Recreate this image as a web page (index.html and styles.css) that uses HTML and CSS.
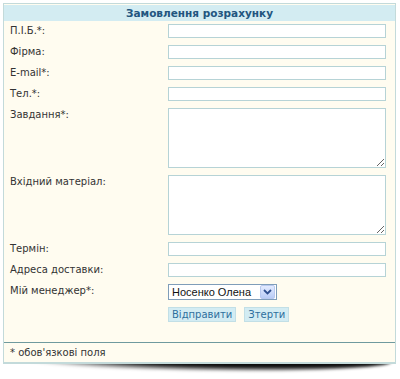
FILE: index.html
```html
<!DOCTYPE html>
<html lang="uk">

<head>
    <meta charset="UTF-8">
    <title>Замовлення розрахунку</title>
    <link rel="stylesheet" href="styles.css">
</head>

<body>
    <div class="panel">
        <div class="panel-head">Замовлення розрахунку</div>

        <form class="order-form">
            <label class="lbl">П.І.Б.*:</label>
            <input type="text" class="field">

            <label class="lbl">Фірма:</label>
            <input type="text" class="field">

            <label class="lbl">E-mail*:</label>
            <input type="text" class="field">

            <label class="lbl">Тел.*:</label>
            <input type="text" class="field">

            <label class="lbl">Завдання*:</label>
            <textarea class="field area"></textarea>

            <label class="lbl">Вхідний матеріал:</label>
            <textarea class="field area"></textarea>

            <label class="lbl">Термін:</label>
            <input type="text" class="field">

            <label class="lbl">Адреса доставки:</label>
            <input type="text" class="field">

            <label class="lbl">Мій менеджер*:</label>
            <div class="select">
                <span class="select-text">Носенко Олена</span>
                <span class="select-btn">
                    <svg width="9" height="6" viewBox="0 0 9 6">
                        <path d="M1 1 L4.5 4.5 L8 1" fill="none" stroke="#2f4f8f" stroke-width="1.8"/>
                    </svg>
                </span>
            </div>

            <span></span>
            <div class="buttons">
                <button type="button" class="btn">Відправити</button>
                <button type="reset" class="btn">Зтерти</button>
            </div>
        </form>

        <div class="panel-foot">* обов'язкові поля</div>
    </div>
    <div class="shadow"></div>
</body>

</html>
```

FILE: styles.css
```css
body {
    margin: 0;
    padding: 3px;
    background: #fff;
    font-family: "DejaVu Sans", Verdana, sans-serif;
    font-size: 10px;
    color: #333;
}

.panel {
    position: relative;
    z-index: 1;
    width: 391px;
    border: 1px solid #c3dada;
    border-bottom-width: 2px;
    background: #fffcf0;
}

.panel-head {
    margin-top: 1px;
    height: 16px;
    line-height: 16px;
    background: #d3ecf2;
    color: #22557f;
    font-weight: bold;
    font-size: 10.5px;
    text-align: center;
}

.order-form {
    display: grid;
    grid-template-columns: 158px 218px;
    row-gap: 7px;
    padding: 3px 0 20px 6px;
    border-bottom: 1px solid #6f9a9e;
}

.lbl {
    line-height: 14px;
}

.field {
    box-sizing: border-box;
    width: 218px;
    height: 14px;
    margin: 0;
    padding: 0;
    border: 1px solid #b6d3d6;
    background: #fff;
}

.area {
    height: 60px;
    resize: vertical;
}

.select {
    box-sizing: border-box;
    display: flex;
    align-items: center;
    justify-content: space-between;
    width: 109px;
    height: 16px;
    border: 1px solid #7f9db9;
    background: #fff;
    padding: 0 1px 0 3px;
}

.select-text {
    font-family: "Liberation Sans", Arial, sans-serif;
    font-size: 11px;
    color: #111;
}

.select-btn {
    display: flex;
    align-items: center;
    justify-content: center;
    width: 15px;
    height: 14px;
    border: 1px solid #b9c9ef;
    border-radius: 2px;
    box-sizing: border-box;
    background: linear-gradient(#e3ebff, #b9ccf6);
}

.buttons {
    display: flex;
    gap: 8px;
}

.btn {
    height: 15px;
    margin: 0;
    padding: 0 3px;
    border: 1px solid #c2dfe6;
    background: #d3ecf3;
    color: #2e6f9d;
    font-family: "DejaVu Sans", Verdana, sans-serif;
    font-size: 10px;
    line-height: 13px;
}

.panel-foot {
    height: 19px;
    line-height: 19px;
    padding-left: 6px;
}

.shadow {
    width: 376px;
    height: 20px;
    margin: -12px 0 0 12px;
    border-radius: 50%;
    background: radial-gradient(ellipse at 70% 30%, #000 0%, #111 45%, rgba(0, 0, 0, 0) 70%);
    filter: blur(1.5px);
}
```
